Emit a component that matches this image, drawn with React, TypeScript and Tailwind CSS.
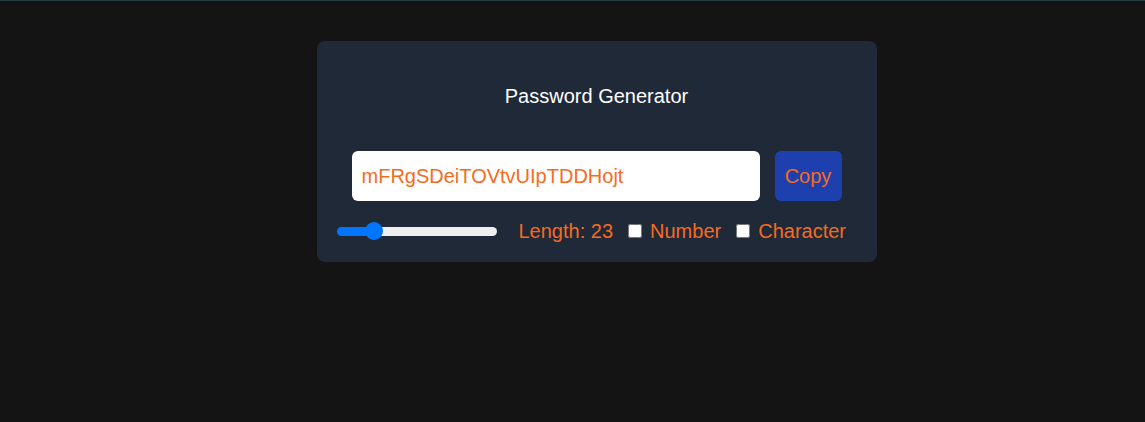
import { useState } from "react";

export default function App() {
    const [length, setLength] = useState(23);
    const [numberAllowed, setNumberAllowed] = useState(false);
    const [charAllowed, setCharAllowed] = useState(false);
    const password = "mFRgSDeiTOVtvUIpTDDHojt";

    const min = 6;
    const max = 92;
    // fill position follows thumb centre (thumb 18px on 160px track)
    const fill = 9 + ((length - min) / (max - min)) * 142;

    return (
        <div className="min-h-screen w-full bg-[#141414] border-t border-[#263b41] pl-12 font-['Liberation_Sans',Arial,sans-serif]">
            {/* Card */}
            <div className="mx-auto mt-[40px] w-[560px] rounded-lg bg-[#1f2937] pt-[41px] pb-[17px]">
                <h1 className="text-center text-xl leading-7 text-white">
                    Password Generator
                </h1>

                {/* Output + copy */}
                <div className="mt-[41px] flex px-[35px] gap-[15px]">
                    <input
                        type="text"
                        value={password}
                        readOnly
                        className="h-[50px] flex-1 rounded-md bg-white px-[10px] text-xl text-[#f66b22] outline-none"
                    />
                    <button className="h-[50px] w-[67px] rounded-md bg-[#1e40af] text-xl text-[#f66b22]">
                        Copy
                    </button>
                </div>

                {/* Options */}
                <div className="mt-4 flex h-7 items-center pl-5 text-xl text-[#f66b22]">
                    <input
                        type="range"
                        min={min}
                        max={max}
                        value={length}
                        onChange={(e) => setLength(Number(e.target.value))}
                        style={{
                            background: `linear-gradient(to right, #0075ff ${fill}px, #efefef ${fill}px)`,
                        }}
                        className="h-[9px] w-40 cursor-pointer appearance-none rounded-full outline-none [&::-webkit-slider-thumb]:size-[18px] [&::-webkit-slider-thumb]:appearance-none [&::-webkit-slider-thumb]:rounded-full [&::-webkit-slider-thumb]:bg-[#0075ff] [&::-moz-range-thumb]:size-[18px] [&::-moz-range-thumb]:rounded-full [&::-moz-range-thumb]:border-0 [&::-moz-range-thumb]:bg-[#0075ff]"
                    />
                    <label className="ml-[22px]">Length: {length}</label>
                    <div className="ml-[15px] flex items-center gap-2">
                        <input
                            type="checkbox"
                            checked={numberAllowed}
                            onChange={() => setNumberAllowed((p) => !p)}
                            className="size-[14px]"
                        />
                        <label>Number</label>
                    </div>
                    <div className="ml-[15px] flex items-center gap-2">
                        <input
                            type="checkbox"
                            checked={charAllowed}
                            onChange={() => setCharAllowed((p) => !p)}
                            className="size-[14px]"
                        />
                        <label>Character</label>
                    </div>
                </div>
            </div>
        </div>
    );
}
